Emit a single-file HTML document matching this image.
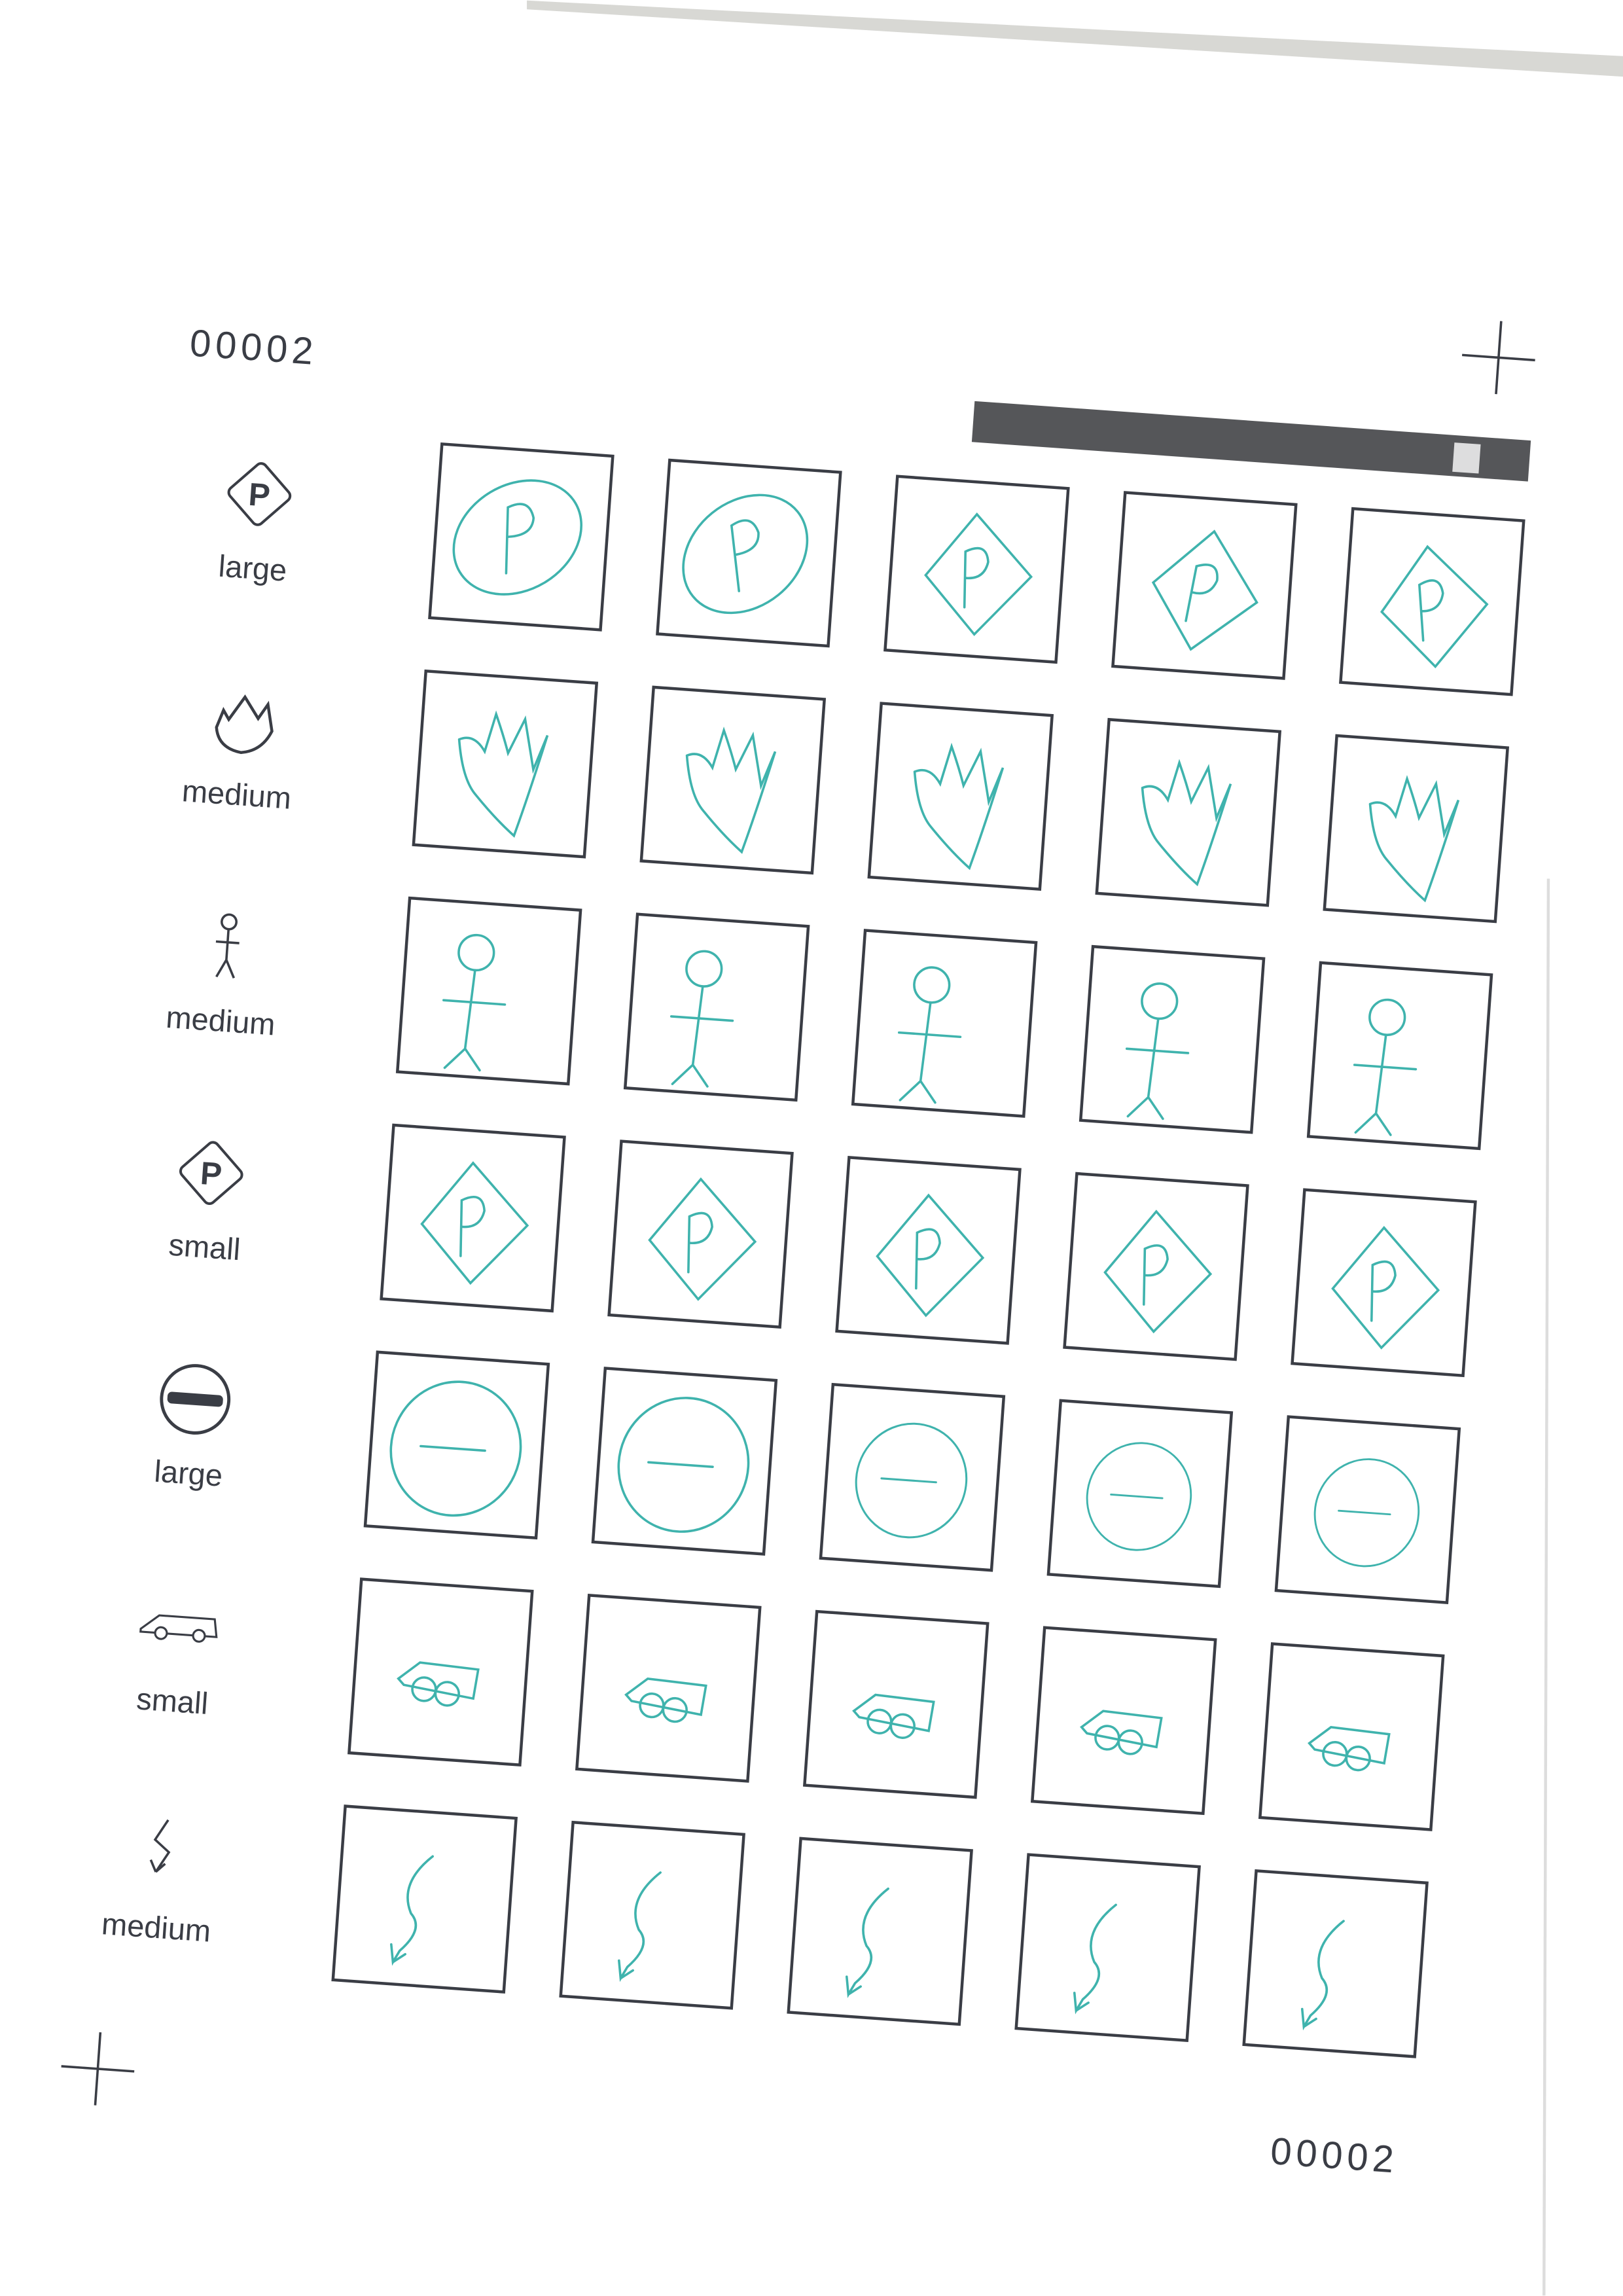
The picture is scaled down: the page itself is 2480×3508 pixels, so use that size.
<!DOCTYPE html>
<html><head><meta charset="utf-8"><style>
html,body{margin:0;padding:0;background:#fff;width:2480px;height:3508px;overflow:hidden}
svg{display:block}
text{font-family:"Liberation Sans","DejaVu Sans",sans-serif;fill:#3a3d45}
</style></head><body>
<svg width="2480" height="3508" viewBox="0 0 1109 1568" xmlns="http://www.w3.org/2000/svg">
<defs>
<g id="b"><rect x="0" y="0" width="117" height="119" fill="none" stroke="#3a3d45" stroke-width="2"/></g>
<g id="s0" fill="none" stroke="#3fb3ad" stroke-width="1.6" stroke-linecap="round"><ellipse cx="56" cy="60" rx="46" ry="36" transform="rotate(-35 56 60)"/><path d="M50 85 L48 40 Q62 32 66 46 Q66 58 50 60"/></g>
<g id="s1" fill="none" stroke="#3fb3ad" stroke-width="1.6" stroke-linecap="round"><path d="M26 45 Q30 72 40 82 Q55 98 68 108 Q76 80 86 38 L78 62 Q74 45 70 28 L60 52 Q56 40 50 26 L44 52 Q36 40 26 45"/></g>
<g id="s2" fill="none" stroke="#3fb3ad" stroke-width="1.6" stroke-linecap="round"><circle cx="48" cy="34" r="12"/><path d="M48 46 L45 100 M28 68 L70 68 M45 100 L32 114 M45 100 L56 114"/></g>
<g id="s3" fill="none" stroke="#3fb3ad" stroke-width="1.6" stroke-linecap="round"><path d="M56 22 L96 62 L60 104 L24 66 Z"/><path d="M52 86 L50 48 Q64 40 66 54 Q64 66 52 66"/></g>
<g id="s4" fill="none" stroke="#3fb3ad" stroke-width="1.6" stroke-linecap="round"><ellipse cx="58" cy="62" rx="44" ry="46" transform="rotate(20 58 62)"/><path d="M34 62 L78 62"/></g>
<g id="s5" fill="none" stroke="#3fb3ad" stroke-width="1.6" stroke-linecap="round"><path d="M30 66 L44 54 L84 56 L82 76 L34 70 Z"/><circle cx="48" cy="72" r="8"/><circle cx="64" cy="74" r="8"/></g>
<g id="s6" fill="none" stroke="#3fb3ad" stroke-width="1.6" stroke-linecap="round"><path d="M62 30 Q40 50 50 70 Q60 80 44 96 L40 104 L38 92 M40 104 L48 98"/></g>
<g id="i1" fill="none" stroke="#3a3d45" stroke-width="2"><path d="M-10 0 L0 -16 L10 -2 L16 -12 L20 6 Q14 20 0 22 Q-16 20 -18 6 L-14 -6 Z"/></g>
</defs>
<path d="M360 0 L1109 38 L1109 52 L360 6 Z" fill="#d8d8d4"/>
<line x1="1058" y1="600" x2="1055" y2="1568" stroke="#ddd" stroke-width="2"/>
<g transform="translate(302 303) rotate(4.06)">
<text x="-133" y="-48" font-size="26" letter-spacing="3" text-anchor="middle">00002</text>
<text x="691" y="1132" font-size="26" letter-spacing="3" text-anchor="middle">00002</text>
<rect x="361" y="-55" width="381" height="28" fill="#555659"/>
<rect x="690" y="-50" width="18" height="20" fill="#fff" opacity=".8"/>
<path d="M691 -110 L741 -110 M716 -135 L716 -85" stroke="#3a3d45" stroke-width="1.6"/>
<path d="M-181 1124 L-131 1124 M-156 1099 L-156 1149" stroke="#3a3d45" stroke-width="1.6"/>
<!-- row icons -->
<g transform="translate(-122 43)"><rect x="-16" y="-16" width="32" height="32" rx="4" transform="rotate(45)" fill="none" stroke="#3a3d45" stroke-width="1.8"/><text x="0" y="8" font-size="22" font-weight="bold" text-anchor="middle">P</text></g>
<text x="-123" y="101" font-size="21" text-anchor="middle">large</text>
<g transform="translate(-122 198)"><use href="#i1"/></g>
<text x="-123" y="256" font-size="21" text-anchor="middle">medium</text>
<g transform="translate(-122 352)" fill="none" stroke="#3a3d45" stroke-width="1.6"><circle cx="0" cy="-16" r="5"/><path d="M0 -11 L0 10 M-8 -2 L8 -2 M0 10 L-6 22 M0 10 L6 22"/></g>
<text x="-123" y="411" font-size="21" text-anchor="middle">medium</text>
<g transform="translate(-122 508)"><rect x="-16" y="-16" width="32" height="32" rx="4" transform="rotate(45)" fill="none" stroke="#3a3d45" stroke-width="1.8"/><text x="0" y="8" font-size="22" font-weight="bold" text-anchor="middle">P</text></g>
<text x="-123" y="566" font-size="21" text-anchor="middle">small</text>
<g transform="translate(-122 663)"><circle r="23" fill="none" stroke="#3a3d45" stroke-width="2.2"/><rect x="-19" y="-4" width="38" height="8" rx="3" fill="#3a3d45"/></g>
<text x="-123" y="721" font-size="21" text-anchor="middle">large</text>
<g transform="translate(-122 818)" fill="none" stroke="#3a3d45" stroke-width="1.4"><path d="M-26 4 L-14 -6 L24 -6 L26 6 L-26 6 Z"/><circle cx="-12" cy="6" r="4" fill="#fff"/><circle cx="14" cy="6" r="4" fill="#fff"/></g>
<text x="-123" y="877" font-size="21" text-anchor="middle">small</text>
<g transform="translate(-122 973)" fill="none" stroke="#3a3d45" stroke-width="1.6"><path d="M2 -22 L-6 -8 L4 0 L-4 14 M-4 14 L-8 6 M-4 14 L2 8"/></g>
<text x="-123" y="1032" font-size="21" text-anchor="middle">medium</text>
<!-- grid -->
<g id="r0"><use href="#b"/><use href="#s0"/><g transform="translate(156 0)"><use href="#b"/><use href="#s0" transform="rotate(-8 58 60)"/></g><g transform="translate(312 0)"><use href="#b"/><use href="#s3"/></g><g transform="translate(468 0)"><use href="#b"/><use href="#s3" transform="rotate(10 58 60)"/></g><g transform="translate(624 0)"><use href="#b"/><use href="#s3" transform="rotate(-5 58 60)"/></g></g>
<g transform="translate(0 155.5)"><use href="#b"/><use href="#s1"/><g transform="translate(156 0)"><use href="#b"/><use href="#s1"/></g><g transform="translate(312 0)"><use href="#b"/><use href="#s1"/></g><g transform="translate(468 0)"><use href="#b"/><use href="#s1"/></g><g transform="translate(624 0)"><use href="#b"/><use href="#s1"/></g></g>
<g transform="translate(0 311)"><use href="#b"/><use href="#s2"/><g transform="translate(156 0)"><use href="#b"/><use href="#s2"/></g><g transform="translate(312 0)"><use href="#b"/><use href="#s2"/></g><g transform="translate(468 0)"><use href="#b"/><use href="#s2"/></g><g transform="translate(624 0)"><use href="#b"/><use href="#s2"/></g></g>
<g transform="translate(0 466.5)"><use href="#b"/><use href="#s3"/><g transform="translate(156 0)"><use href="#b"/><use href="#s3"/></g><g transform="translate(312 0)"><use href="#b"/><use href="#s3"/></g><g transform="translate(468 0)"><use href="#b"/><use href="#s3"/></g><g transform="translate(624 0)"><use href="#b"/><use href="#s3"/></g></g>
<g transform="translate(0 622)"><use href="#b"/><use href="#s4"/><g transform="translate(156 0)"><use href="#b"/><use href="#s4"/></g><g transform="translate(312 0)"><use href="#b"/><use href="#s4" transform="translate(58 60) scale(.85) translate(-58 -60)"/></g><g transform="translate(468 0)"><use href="#b"/><use href="#s4" transform="translate(58 60) scale(.8) translate(-58 -60)"/></g><g transform="translate(624 0)"><use href="#b"/><use href="#s4" transform="translate(58 60) scale(.8) translate(-58 -60)"/></g></g>
<g transform="translate(0 777.5)"><use href="#b"/><use href="#s5"/><g transform="translate(156 0)"><use href="#b"/><use href="#s5"/></g><g transform="translate(312 0)"><use href="#b"/><use href="#s5"/></g><g transform="translate(468 0)"><use href="#b"/><use href="#s5"/></g><g transform="translate(624 0)"><use href="#b"/><use href="#s5"/></g></g>
<g transform="translate(0 933)"><use href="#b"/><use href="#s6"/><g transform="translate(156 0)"><use href="#b"/><use href="#s6"/></g><g transform="translate(312 0)"><use href="#b"/><use href="#s6"/></g><g transform="translate(468 0)"><use href="#b"/><use href="#s6"/></g><g transform="translate(624 0)"><use href="#b"/><use href="#s6"/></g></g>
</g>
</svg>
</body></html>
